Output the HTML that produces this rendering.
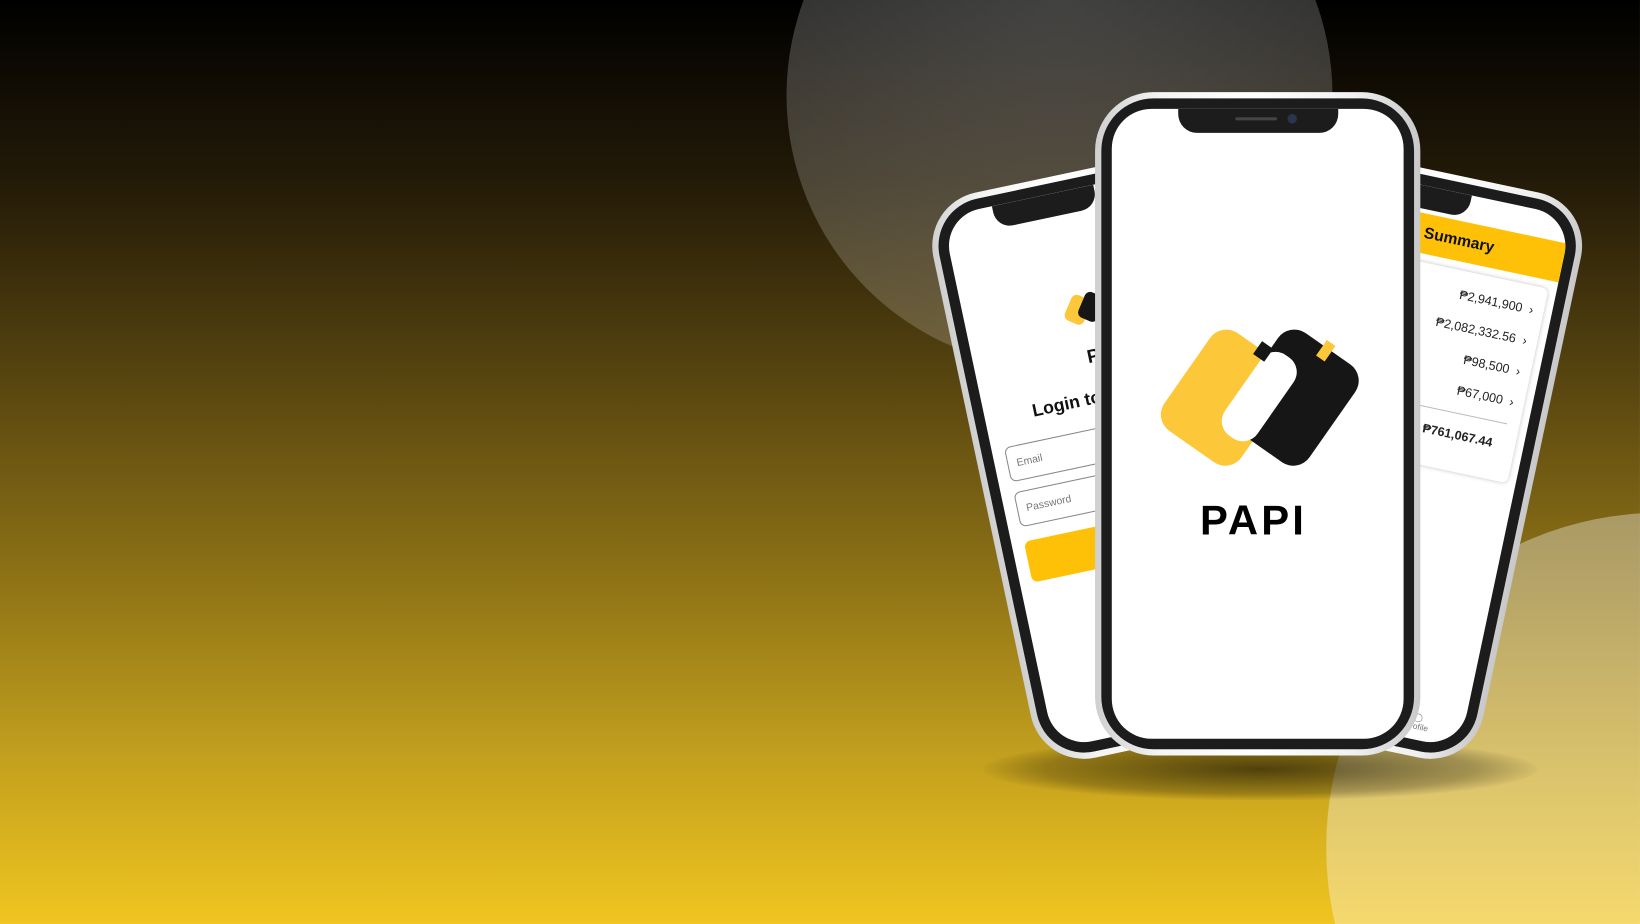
<!DOCTYPE html>
<html><head><meta charset="utf-8"><style>
html,body{margin:0;padding:0;}
body{width:1640px;height:924px;overflow:hidden;position:relative;font-family:"Liberation Sans",sans-serif;}
#s{position:absolute;left:0;top:0;width:1568px;height:883px;transform-origin:0 0;transform:scale(1.0459,1.0464);overflow:hidden;
background:linear-gradient(180deg,#000 0%,#241b08 20%,#5a4710 42%,#8c7116 62%,#c3a01e 82%,#f0c520 100%);}
.c1{position:absolute;left:752px;top:-170px;width:522px;height:522px;border-radius:50%;background:radial-gradient(circle at 50% 30%,rgba(255,255,255,.26),rgba(255,255,255,.2) 60%,rgba(255,255,255,.16));}
.c2{position:absolute;left:1268px;top:490px;width:640px;height:640px;border-radius:50%;background:rgba(255,255,255,.35);}
.shadow{position:absolute;left:940px;top:705px;width:530px;height:60px;border-radius:50%;background:radial-gradient(ellipse at center,rgba(0,0,0,.6),rgba(0,0,0,.25) 55%,rgba(0,0,0,0) 72%);}
.ph{position:absolute;box-sizing:border-box;background:linear-gradient(90deg,#cfcfcf,#f4f4f4 20%,#fff 50%,#f0f0f0 80%,#c8c8c8);border-radius:52px;padding:6px;}
.bez{width:100%;height:100%;box-sizing:border-box;background:#1c1c1c;border-radius:46px;padding:10px;position:relative;}
.scr{width:100%;height:100%;background:#fff;border-radius:36px;position:relative;overflow:hidden;}
.notch{position:absolute;top:0;left:50%;transform:translateX(-50%);width:54%;height:22px;background:#1c1c1c;border-radius:0 0 16px 16px;}
.lp{left:936px;top:160px;width:278px;height:552px;transform:rotate(-12deg);}
.rp{left:1190px;top:160px;width:278px;height:552px;transform:rotate(12deg);}
.cp{left:1047px;top:88px;width:311px;height:634px;border-radius:56px;}
.cp .bez{border-radius:50px;padding:10px;}
.cp .scr{border-radius:38px;}
.t{position:absolute;white-space:nowrap;color:#111;}
.inp{position:absolute;left:12px;width:230px;height:34px;border:1px solid #888;border-radius:6px;box-sizing:border-box;font-size:10px;color:#777;padding:11px 8px;}
.row{position:absolute;right:18px;font-size:12px;color:#222;}
</style></head><body><div id="s">
<div class="c1"></div><div class="c2"></div><div class="shadow"></div>

<div class="ph lp"><div class="bez"><div class="scr">
 <div class="notch" style="width:40%;left:40%"></div>
 <svg style="position:absolute;left:92px;top:96px" width="44" height="40" viewBox="0 0 40 36"><rect x="6" y="4" width="18" height="24" rx="5" fill="#fcc83a" transform="rotate(35 15 16)"/><rect x="18" y="4" width="18" height="24" rx="5" fill="#161616" transform="rotate(35 27 16)"/></svg>
 <div class="t" style="left:108px;top:150px;font-size:18px;font-weight:bold">PAPI</div>
 <div class="t" style="left:46px;top:190px;font-size:17px;font-weight:bold">Login to your account</div>
 <div class="inp" style="top:228px">Email</div>
 <div class="inp" style="top:272px">Password</div>
 <div style="position:absolute;left:12px;top:320px;width:230px;height:40px;background:#ffc107;border-radius:6px"></div>
 <div class="t" style="left:100px;top:445px;font-size:10px">Don't have an account?</div>
</div></div></div>

<div class="ph rp"><div class="bez"><div class="scr">
 <div class="notch" style="width:40%;left:40%"></div>
 <div style="position:absolute;left:0;top:26px;width:100%;height:38px;background:#ffc107"></div>
 <div class="t" style="left:58px;top:36px;font-size:15px;font-weight:bold">Report Summary</div>
 <div style="position:absolute;left:8px;right:8px;top:72px;height:190px;border-radius:6px;box-shadow:0 0 4px rgba(0,0,0,.25)"></div>
 <div class="row" style="top:88px">₱2,941,900 &nbsp;›</div>
 <div class="row" style="top:118px">₱2,082,332.56 &nbsp;›</div>
 <div class="row" style="top:148px">₱98,500 &nbsp;›</div>
 <div class="row" style="top:178px">₱67,000 &nbsp;›</div>
 <div style="position:absolute;left:30px;right:20px;top:206px;border-top:1px solid #bbb"></div>
 <div class="row" style="top:220px;font-weight:bold;right:30px">₱761,067.44</div>
 <div class="t" style="left:190px;top:494px;font-size:8px;color:#777;text-align:center">◯<br>Profile</div>
</div></div></div>

<div class="ph cp"><div class="bez"><div class="scr">
 <div class="notch" style="width:153px;height:23px;border-radius:0 0 18px 18px"></div>
 <div style="position:absolute;left:118px;top:8px;width:40px;height:3px;background:#444;border-radius:2px"></div>
 <div style="position:absolute;left:168px;top:5px;width:9px;height:9px;background:#2a3550;border-radius:50%"></div>
 <svg style="position:absolute;left:0;top:0" width="291" height="614" viewBox="1061 98 291 614">
  <rect x="1125" y="317" width="90" height="114" rx="19" fill="#fcc83a" transform="rotate(35 1170 374)"/>
  <rect x="1190" y="317" width="90" height="114" rx="19" fill="#161616" transform="rotate(35 1235 374)"/>
  <rect x="1183" y="326" width="38" height="94" rx="17" fill="#fff" transform="rotate(35 1202 373)"/>
  <rect x="1199" y="322" width="13" height="15" fill="#161616" transform="rotate(35 1205 330)"/>
  <rect x="1260" y="320" width="10" height="18" fill="#fcc83a" transform="rotate(35 1265 330)"/>
 </svg>
 <div class="t" style="left:0;width:100%;text-align:center;top:372px;font-size:40px;font-weight:bold;letter-spacing:3px;color:#000;text-indent:-8px">PAPI</div>
</div></div></div>
</div></body></html>
